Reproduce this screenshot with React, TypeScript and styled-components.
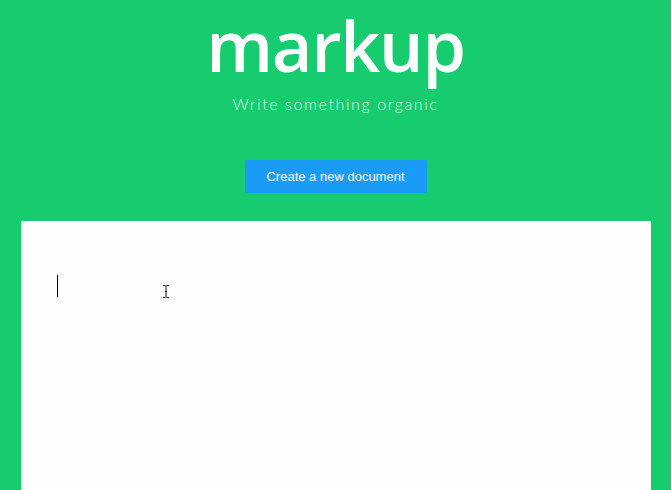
import React from "react";
import styled, { createGlobalStyle } from "styled-components";

const Global = createGlobalStyle`
  html, body { margin: 0; padding: 0; background: #16cc6f; }
  body { font-family: "Liberation Sans", Arial, sans-serif; overflow: hidden; }
`;

const Page = styled.div`
  display: flex;
  flex-direction: column;
  align-items: center;
  height: 490px;
  overflow: hidden;
  padding-top: 1px;
  box-sizing: border-box;
`;

const Title = styled.h1`
  margin: 0;
  font-family: "Open Sans", sans-serif;
  font-weight: 600;
  font-size: 70px;
  line-height: 88px;
  color: #ffffff;
  letter-spacing: -1.2px;
`;

const Tagline = styled.p`
  margin: 5px 0 0;
  font-family: "Lato", sans-serif;
  font-weight: 300;
  font-size: 16px;
  line-height: 20px;
  letter-spacing: 1.6px;
  color: #dcf7e7;
`;

const Button = styled.button`
  margin-top: 46px;
  width: 182px;
  height: 33px;
  border: none;
  border-radius: 2px;
  background: #1a9bf6;
  color: #ffffff;
  font-family: "Liberation Sans", Arial, sans-serif;
  font-size: 13px;
  cursor: pointer;
`;

const Editor = styled.div`
  position: relative;
  margin-top: 28px;
  align-self: stretch;
  margin-left: 21px;
  margin-right: 20px;
  flex: 1;
  background: #fefefe;
  padding: 54px 36px;
`;

const Caret = styled.span`
  display: block;
  width: 1px;
  height: 22px;
  background: #000;
`;

const Pointer = styled.svg`
  position: absolute;
  left: 141px;
  top: 63px;
`;

export default function App() {
  return (
    <>
      <Global />
      <Page>
        <Title>markup</Title>
        <Tagline>Write something organic</Tagline>
        <Button>Create a new document</Button>
        <Editor>
          <Caret />
          <Pointer width="8" height="15" viewBox="0 0 8 15">
            <path d="M1 1.5h2.5M4.5 1.5H7M4 2v11M1 13.5h2.5M4.5 13.5H7M3 7.5h2" stroke="#111" strokeWidth="1" fill="none" />
          </Pointer>
        </Editor>
      </Page>
    </>
  );
}
